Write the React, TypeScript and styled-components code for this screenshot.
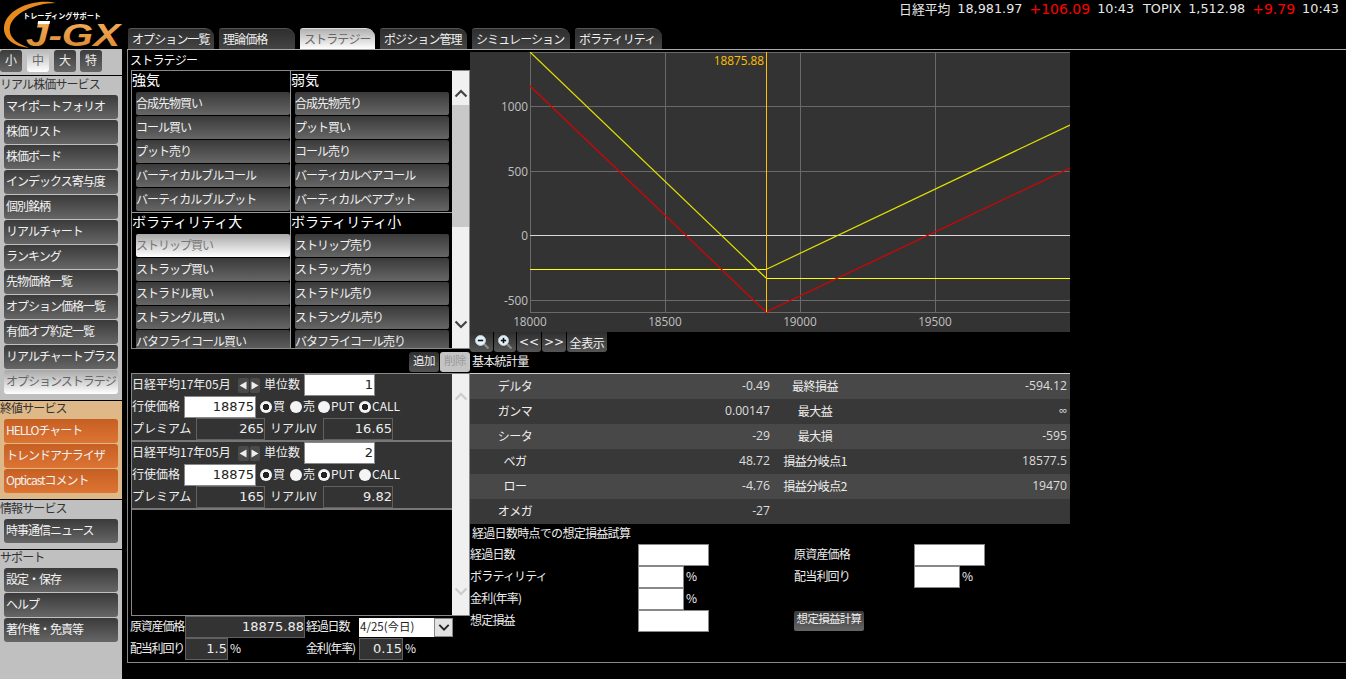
import React from "react";
import styled, { createGlobalStyle } from "styled-components";

const jpFont = `"Noto Sans CJK JP", "Noto Sans", sans-serif`;
const numFont = `"DejaVu Sans", sans-serif`;
const uiFont = `"Open Sans", sans-serif`;

const GlobalStyle = createGlobalStyle`
  html, body { margin: 0; padding: 0; background: #000; }
  body { font-family: ${jpFont}; color: #eee; }
  * { box-sizing: border-box; }
`;

const Page = styled.div`
  width: 1346px;
  height: 679px;
  display: flex;
  overflow: hidden;
  background: #000;
`;

const LeftRail = styled.div`
  width: 122px;
  flex: none;
  display: flex;
  flex-direction: column;
`;

const LogoBox = styled.div`
  height: 49px;
  flex: none;
`;

const LogoSvg = styled.svg`
  display: block;
  overflow: visible;
`;

const Sidebar = styled.div`
  flex: 1;
  background: #c0c0c0;
`;

const SizeRow = styled.div`
  height: 27px;
  display: flex;
  padding: 1px 0 0 0;
  border-bottom: 1px solid #000;
`;

const SizeButton = styled.div<{ $active?: boolean; $left: number }>`
  width: 22px;
  height: 22px;
  margin-left: ${(p) => p.$left}px;
  border-radius: 3px;
  font-size: 12px;
  line-height: 20px;
  text-align: center;
  color: ${(p) => (p.$active ? "#666" : "#eee")};
  background: ${(p) =>
    p.$active ? "linear-gradient(#b8b8b8, #fff)" : "linear-gradient(#3c3c3c, #666)"};
`;

const Section = styled.div<{ $tint?: boolean; $top?: number; $last?: boolean }>`
  padding: ${(p) => p.$top ?? 0}px 0 6px;
  background: ${(p) => (p.$tint ? "#deb887" : "transparent")};
  border-bottom: ${(p) => (p.$last ? "none" : "1px solid #000")};
`;

const SectionLabel = styled.div`
  height: 18px;
  font-size: 12px;
  line-height: 14px;
  letter-spacing: -0.9px;
  color: #333;
`;

const NavList = styled.div`
  display: flex;
  flex-direction: column;
  gap: 1px;
  padding-left: 4px;
`;

const NavButton = styled.div<{ $kind?: "dark" | "on" | "orange" }>`
  width: 114px;
  height: 24px;
  padding-left: 2px;
  border-radius: 3px;
  font-size: 12px;
  line-height: 22px;
  letter-spacing: -1px;
  white-space: nowrap;
  overflow: hidden;
  color: ${(p) => (p.$kind === "on" ? "#666" : "#f2f2f2")};
  background: ${(p) =>
    p.$kind === "on"
      ? "linear-gradient(#a8a8a8, #fff)"
      : p.$kind === "orange"
        ? "linear-gradient(#c65f22, #dc7434)"
        : "linear-gradient(#3a3a3a, #666)"};
`;

const RightPane = styled.div`
  flex: 1;
  padding-left: 5px;
  display: flex;
  flex-direction: column;
`;

const Header = styled.div`
  height: 50px;
  flex: none;
  display: flex;
  flex-direction: column;
  border-bottom: 1px solid #aaa;
`;

const Ticker = styled.div`
  height: 28px;
  flex: none;
  display: flex;
  justify-content: flex-end;
  gap: 9px;
  padding: 0 7px 0 0;
`;

const TickerGroup = styled.div`
  display: flex;
  gap: 7px;
  height: 17px;
  align-items: center;
`;

const TickerText = styled.span<{ $up?: boolean }>`
  font-family: ${(p) => (p.$up ? numFont : `"DejaVu Sans", ${jpFont}`)};
  font-size: ${(p) => (p.$up ? 14 : 12.8)}px;
  color: ${(p) => (p.$up ? "#f00" : "#e8e8e8")};
  white-space: nowrap;
`;

const Tabs = styled.div`
  display: flex;
  gap: 5px;
  padding-left: 1px;
  height: 21px;
`;

const Tab = styled.div<{ $w: number; $active?: boolean }>`
  width: ${(p) => p.$w}px;
  padding-left: 4px;
  border-radius: 3px 9px 0 0;
  border-top: 1px solid ${(p) => (p.$active ? "#ddd" : "#555")};
  font-size: 12px;
  line-height: 19px;
  letter-spacing: -0.9px;
  white-space: nowrap;
  overflow: hidden;
  color: ${(p) => (p.$active ? "#666" : "#f0f0f0")};
  background: ${(p) =>
    p.$active ? "linear-gradient(#b0b0b0, #fff)" : "linear-gradient(#2e2e2e, #444)"};
`;

const Main = styled.div`
  height: 613px;
  flex: none;
  display: flex;
  border-left: 1px solid #888;
  border-bottom: 1px solid #888;
`;

const LeftCol = styled.div`
  width: 342px;
  flex: none;
  display: flex;
  flex-direction: column;
`;

const RightCol = styled.div`
  width: 600px;
  flex: none;
  padding-top: 2px;
  display: flex;
  flex-direction: column;
`;

const PanelTitle = styled.div`
  height: 20px;
  padding-left: 2px;
  font-size: 12px;
  line-height: 19px;
  letter-spacing: -0.8px;
  color: #fff;
`;

const Panel = styled.div<{ $h: number }>`
  height: ${(p) => p.$h}px;
  margin-left: 3px;
  display: flex;
  border: 1px solid #888;
  flex: none;
`;

const StrategyGrid = styled.div`
  width: 320px;
  flex: none;
  display: flex;
  flex-direction: column;
  clip-path: inset(-6px 0 0 0);
`;

const StrategyRow = styled.div<{ $divider?: boolean }>`
  display: flex;
  flex: none;
  border-bottom: ${(p) => (p.$divider ? "1px solid #999" : "none")};
`;

const Group = styled.div<{ $divider?: boolean }>`
  width: ${(p) => (p.$divider ? 159 : 161)}px;
  padding-left: 4px;
  padding-right: ${(p) => (p.$divider ? 0 : 3)}px;
  border-right: ${(p) => (p.$divider ? "1px solid #999" : "none")};
`;

const GroupTitle = styled.div`
  height: 21px;
  margin-left: -4px;
  font-size: 14px;
  line-height: 17px;
  color: #fff;
  white-space: nowrap;
`;

const StrategyButton = styled.div<{ $on?: boolean }>`
  height: 23px;
  margin-bottom: 1px;
  border-radius: 2px;
  font-size: 12px;
  line-height: 22px;
  letter-spacing: -1px;
  white-space: nowrap;
  color: ${(p) => (p.$on ? "#777" : "#f0f0f0")};
  background: ${(p) =>
    p.$on ? "linear-gradient(#a8a8a8, #fff)" : "linear-gradient(#3a3a3a, #666)"};
`;

const Scrollbar = styled.div`
  width: 17px;
  flex: none;
  display: flex;
  flex-direction: column;
  background: #f0f0f0;
`;

const ScrollArrow = styled.div<{ $bottom?: boolean }>`
  height: 34px;
  flex: none;
  display: flex;
  justify-content: center;
  align-items: ${(p) => (p.$bottom ? "flex-start" : "flex-end")};
  padding: ${(p) => (p.$bottom ? "6px 0 0" : "0 0 7px")};
  margin-top: ${(p) => (p.$bottom ? "auto" : "0")};
`;

const ScrollThumb = styled.div<{ $h: number }>`
  height: ${(p) => p.$h}px;
  background: #c8c8c8;
  flex: none;
`;

const ActionRow = styled.div`
  height: 24px;
  flex: none;
  padding-top: 3px;
  display: flex;
  justify-content: flex-end;
  gap: 1px;
`;

const ActionButton = styled.div<{ $off?: boolean }>`
  width: 30px;
  height: 20px;
  border-radius: 3px;
  font-size: 11.5px;
  line-height: 17px;
  text-align: center;
  letter-spacing: -0.5px;
  color: ${(p) => (p.$off ? "#999" : "#eee")};
  background: ${(p) => (p.$off ? "#c4c4c4" : "linear-gradient(#2e2e2e, #555)")};
`;

const LegList = styled.div`
  width: 320px;
  flex: none;
`;

const Leg = styled.div`
  height: 68px;
  background: #333;
  border-bottom: 2px solid #777;
`;

const LegRow = styled.div`
  height: 22px;
  display: flex;
  align-items: center;
`;

const FieldLabel = styled.div<{ $w: number; $pad?: number; $tight?: boolean }>`
  width: ${(p) => p.$w}px;
  height: 22px;
  flex: none;
  padding-left: ${(p) => p.$pad ?? 0}px;
  font-size: 12px;
  line-height: 19px;
  letter-spacing: ${(p) => (p.$tight ? "-1.2px" : "0")};
  white-space: nowrap;
  color: #f0f0f0;
`;

const WhiteBox = styled.div<{ $w: number }>`
  width: ${(p) => p.$w}px;
  height: 22px;
  flex: none;
  padding-right: 1px;
  background: #fff;
  border: 1px solid #888;
  font-family: ${numFont};
  font-size: 13px;
  line-height: 20px;
  text-align: right;
  color: #222;
`;

const DarkBox = styled.div<{ $w: number }>`
  width: ${(p) => p.$w}px;
  height: 22px;
  flex: none;
  background: #333;
  border: 1px solid #606060;
  font-family: ${numFont};
  font-size: 13px;
  line-height: 20px;
  text-align: right;
  color: #eee;
`;

const Spinner = styled.div`
  width: 22px;
  height: 15px;
  flex: none;
  display: flex;
  gap: 1px;
`;

const SpinButton = styled.div`
  flex: 1;
  display: flex;
  align-items: center;
  justify-content: center;
  background: #4a4a4a;
  border-radius: 2px;
`;

const RadioGroup = styled.div`
  display: flex;
  margin-left: 4px;
`;

const RadioItem = styled.div<{ $w: number }>`
  width: ${(p) => p.$w}px;
  flex: none;
  display: flex;
  align-items: center;
  gap: 1px;
`;

const RadioText = styled.span`
  font-size: 12px;
  line-height: 16px;
  margin-top: -3px;
  color: #f0f0f0;
`;

const RadioDot = styled.span<{ $on?: boolean }>`
  width: 12px;
  height: 12px;
  flex: none;
  border-radius: 50%;
  background: ${(p) =>
    p.$on ? "radial-gradient(circle, #222 0 3px, #f4f4f4 3.5px)" : "#f4f4f4"};
`;

const BottomRow = styled.div`
  height: 22px;
  flex: none;
  display: flex;
  align-items: center;
  padding-left: 2px;
`;

const Percent = styled.div<{ $w?: number }>`
  width: ${(p) => (p.$w ? `${p.$w}px` : "auto")};
  flex: none;
  padding-left: 2px;
  font-size: 12px;
  line-height: 18px;
  margin-top: -2px;
  color: #eee;
`;

const SelectBox = styled.div`
  width: 94px;
  height: 19px;
  flex: none;
  display: flex;
  background: #fff;
  font-size: 11.5px;
  line-height: 17px;
  color: #222;
  padding-left: 1px;
`;

const SelectValue = styled.div`
  flex: 1;
  white-space: nowrap;
`;

const SelectArrow = styled.div`
  width: 19px;
  flex: none;
  display: flex;
  align-items: center;
  justify-content: center;
  background: #e2e2e2;
  border: 1px solid #888;
`;

const ChartBox = styled.div`
  height: 280px;
  flex: none;
  background: #333;
`;

const ChartSvg = styled.svg`
  display: block;
  font-family: ${uiFont};
  font-size: 11.8px;
`;

const Toolbar = styled.div`
  height: 20px;
  flex: none;
  display: flex;
  gap: 1px;
`;

const ToolButton = styled.div<{ $w: number; $arrows?: boolean }>`
  width: ${(p) => p.$w}px;
  display: flex;
  align-items: center;
  justify-content: center;
  border-radius: 0 0 3px 3px;
  font-family: ${(p) => (p.$arrows ? numFont : jpFont)};
  font-size: 12px;
  line-height: 17px;
  letter-spacing: ${(p) => (p.$arrows ? "0" : "-0.4px")};
  color: #eee;
  background: linear-gradient(#2e2e2e, #555);
`;

const SubTitle = styled.div<{ $h: number }>`
  height: ${(p) => p.$h}px;
  flex: none;
  padding-left: 2px;
  font-size: 12px;
  line-height: ${(p) => p.$h - 3}px;
  letter-spacing: -0.7px;
  color: #eee;
`;

const StatsTable = styled.div`
  flex: none;
  border-top: 1px solid #ccc;
`;

const StatsRow = styled.div<{ $odd: boolean }>`
  height: 25px;
  display: grid;
  grid-template-columns: 90px 210px 90px 207px;
  align-items: center;
  background: ${(p) => (p.$odd ? "#484848" : "#383838")};
`;

const StatsLabel = styled.div`
  font-size: 12px;
  line-height: 17px;
  margin-top: -3px;
  letter-spacing: -0.5px;
  text-align: center;
  white-space: nowrap;
  color: #eee;
`;

const StatsValue = styled.div`
  font-family: ${uiFont};
  font-size: 12.2px;
  line-height: 15px;
  margin-top: -2px;
  text-align: right;
  color: #ddd;
`;

const SimGrid = styled.div`
  display: grid;
  grid-template-columns: 168px 156px 120px 1fr;
  grid-auto-rows: 22px;
  align-items: center;
`;

const SimLabel = styled.div`
  font-size: 12px;
  line-height: 16px;
  margin-top: -3px;
  letter-spacing: -0.8px;
  color: #eee;
  white-space: nowrap;
`;

const SimCell = styled.div`
  display: flex;
  align-items: center;
`;

const SimInput = styled.div<{ $w: number }>`
  width: ${(p) => p.$w}px;
  height: 22px;
  flex: none;
  background: #fff;
  border: 1px solid #888;
`;

const CalcButton = styled.div`
  width: 70px;
  height: 20px;
  border-radius: 2px;
  font-size: 11.5px;
  line-height: 15px;
  letter-spacing: -0.7px;
  text-align: center;
  color: #eee;
  background: linear-gradient(#3a3a3a, #666);
`;

const Logo = () => (
  <LogoSvg width="122" height="49" viewBox="0 0 122 49">
    <defs>
      <linearGradient id="gx" x1="0" y1="0" x2="0" y2="1">
        <stop offset="0" stopColor="#f4b060" />
        <stop offset="1" stopColor="#d8862c" />
      </linearGradient>
    </defs>
    <path
      d="M56 3 C36 -2 6 8 4 27 C3 38 14 47 29 47.5 C17 44 8 37 10 27 C12 14 34 3 56 3 Z"
      fill="#e88a1c"
    />
    <text x="23" y="19" fontFamily={jpFont} fontSize="7.5" fontWeight="700" fill="#fff" textLength="78" lengthAdjust="spacingAndGlyphs">
      トレーディングサポート
    </text>
    <text x="26" y="46" fontFamily={`"Liberation Sans", sans-serif`} fontSize="31" fontWeight="700" fontStyle="italic" fill="url(#gx)" textLength="94" lengthAdjust="spacingAndGlyphs">
      J-GX
    </text>
    <rect x="38" y="21" width="12" height="3" fill="#fff" transform="skewX(-8) translate(3 0)" />
  </LogoSvg>
);

const Chevron = ({ up, color, w = 14 }: { up?: boolean; color: string; w?: number }) => (
  <svg width={w} height="9" viewBox="0 0 14 9">
    <path d={up ? "M1.5 7.5 L7 2 L12.5 7.5" : "M1.5 1.5 L7 7 L12.5 1.5"} fill="none" stroke={color} strokeWidth="2.2" />
  </svg>
);

const Magnifier = ({ plus }: { plus?: boolean }) => (
  <svg width="16" height="16" viewBox="0 0 16 16">
    <path d="M9 9 L14.5 14.5" stroke="#888" strokeWidth="2.4" />
    <circle cx="6.5" cy="6.5" r="5" fill="#e4f4fa" stroke="#b8c8d0" />
    <path d="M3.8 6.5 H9.2" stroke="#111" strokeWidth="1.6" />
    {plus && <path d="M6.5 3.8 V9.2" stroke="#111" strokeWidth="1.6" />}
  </svg>
);

const Triangle = ({ right }: { right?: boolean }) => (
  <svg width="8" height="9" viewBox="0 0 8 9">
    <path d={right ? "M0.5 0.5 L7.5 4.5 L0.5 8.5 Z" : "M7.5 0.5 L0.5 4.5 L7.5 8.5 Z"} fill="#eee" />
  </svg>
);

const xTicks = [
  { x: 60, t: "18000" },
  { x: 195, t: "18500" },
  { x: 330, t: "19000" },
  { x: 465, t: "19500" },
];
const yTicks = [
  { y: 54, t: "1000" },
  { y: 119, t: "500" },
  { y: 183, t: "0" },
  { y: 248, t: "-500" },
];

const PayoffChart = () => (
  <ChartSvg width="600" height="280" viewBox="0 0 600 280">
    <line x1="60" y1="0.5" x2="600" y2="0.5" stroke="#6a6a6a" />
    <line x1="60" y1="260.5" x2="600" y2="260.5" stroke="#6a6a6a" />
    {xTicks.map((k) => (
      <g key={k.t}>
        <line x1={k.x + 0.5} y1="0" x2={k.x + 0.5} y2="260" stroke="#6a6a6a" />
        <text x={k.x} y="274" textAnchor="middle" fill="#c0c0c0">
          {k.t}
        </text>
      </g>
    ))}
    {yTicks.map((k) => (
      <g key={k.t}>
        <line x1="60" y1={k.y + 0.5} x2="600" y2={k.y + 0.5} stroke={k.t === "0" ? "#d8d8d8" : "#6a6a6a"} />
        <text x="58" y={k.y + 5} textAnchor="end" fill="#c0c0c0">
          {k.t}
        </text>
      </g>
    ))}
    <line x1="60" y1="217.5" x2="296" y2="217.5" stroke="#ffff00" />
    <line x1="296" y1="226.5" x2="600" y2="226.5" stroke="#ffff00" />
    <polyline points="60,0 296,226" fill="none" stroke="#e0e000" strokeWidth="1.2" />
    <polyline points="296,217.5 600,73" fill="none" stroke="#e0e000" strokeWidth="1.2" />
    <polyline points="60,34 296,260 600,116" fill="none" stroke="#dc0000" strokeWidth="1.2" />
    <line x1="296.5" y1="0" x2="296.5" y2="260" stroke="#ffc000" />
    <text x="294" y="13" textAnchor="end" fill="#ffc000">
      18875.88
    </text>
  </ChartSvg>
);

const realtimeItems = [
  "マイポートフォリオ",
  "株価リスト",
  "株価ボード",
  "インデックス寄与度",
  "個別銘柄",
  "リアルチャート",
  "ランキング",
  "先物価格一覧",
  "オプション価格一覧",
  "有価オプ約定一覧",
  "リアルチャートプラス",
];

const tabs = [
  { t: "オプション一覧", w: 86 },
  { t: "理論価格", w: 76 },
  { t: "ストラテジー", w: 75, active: true },
  { t: "ポジション管理", w: 87 },
  { t: "シミュレーション", w: 98 },
  { t: "ボラティリティ", w: 87 },
];

const bull = ["合成先物買い", "コール買い", "プット売り", "バーティカルブルコール", "バーティカルブルプット"];
const bear = ["合成先物売り", "プット買い", "コール売り", "バーティカルベアコール", "バーティカルベアプット"];
const volUp = ["ストリップ買い", "ストラップ買い", "ストラドル買い", "ストラングル買い", "バタフライコール買い"];
const volDown = ["ストリップ売り", "ストラップ売り", "ストラドル売り", "ストラングル売り", "バタフライコール売り"];

const stats = [
  ["デルタ", "-0.49", "最終損益", "-594.12"],
  ["ガンマ", "0.00147", "最大益", "∞"],
  ["シータ", "-29", "最大損", "-595"],
  ["ベガ", "48.72", "損益分岐点1", "18577.5"],
  ["ロー", "-4.76", "損益分岐点2", "19470"],
  ["オメガ", "-27", "", ""],
];

const legs = [
  { unit: "1", call: true, premium: "265", iv: "16.65" },
  { unit: "2", call: false, premium: "165", iv: "9.82" },
];

const App = () => (
  <Page>
    <GlobalStyle />
    <LeftRail>
      <LogoBox>
        <Logo />
      </LogoBox>
      <Sidebar>
        <SizeRow>
          <SizeButton $left={0}>小</SizeButton>
          <SizeButton $left={5} $active>
            中
          </SizeButton>
          <SizeButton $left={5}>大</SizeButton>
          <SizeButton $left={4}>特</SizeButton>
        </SizeRow>
        <Section $top={1}>
          <SectionLabel>リアル株価サービス</SectionLabel>
          <NavList>
            {realtimeItems.map((t) => (
              <NavButton key={t}>{t}</NavButton>
            ))}
            <NavButton $kind="on">オプションストラテジ</NavButton>
          </NavList>
        </Section>
        <Section $tint>
          <SectionLabel>終値サービス</SectionLabel>
          <NavList>
            <NavButton $kind="orange">HELLOチャート</NavButton>
            <NavButton $kind="orange">トレンドアナライザ</NavButton>
            <NavButton $kind="orange">Opticastコメント</NavButton>
          </NavList>
        </Section>
        <Section $top={1}>
          <SectionLabel>情報サービス</SectionLabel>
          <NavList>
            <NavButton>時事通信ニュース</NavButton>
          </NavList>
        </Section>
        <Section $last>
          <SectionLabel>サポート</SectionLabel>
          <NavList>
            <NavButton>設定・保存</NavButton>
            <NavButton>ヘルプ</NavButton>
            <NavButton>著作権・免責等</NavButton>
          </NavList>
        </Section>
      </Sidebar>
    </LeftRail>

    <RightPane>
      <Header>
        <Ticker>
          <TickerGroup>
            <TickerText>日経平均</TickerText>
            <TickerText>18,981.97</TickerText>
            <TickerText $up>+106.09</TickerText>
            <TickerText>10:43</TickerText>
          </TickerGroup>
          <TickerGroup>
            <TickerText>TOPIX</TickerText>
            <TickerText>1,512.98</TickerText>
            <TickerText $up>+9.79</TickerText>
            <TickerText>10:43</TickerText>
          </TickerGroup>
        </Ticker>
        <Tabs>
          {tabs.map((t) => (
            <Tab key={t.t} $w={t.w} $active={t.active}>
              {t.t}
            </Tab>
          ))}
        </Tabs>
      </Header>

      <Main>
        <LeftCol>
          <PanelTitle>ストラテジー</PanelTitle>
          <Panel $h={279}>
            <StrategyGrid>
              <StrategyRow $divider>
                <Group $divider>
                  <GroupTitle>強気</GroupTitle>
                  {bull.map((t) => (
                    <StrategyButton key={t}>{t}</StrategyButton>
                  ))}
                </Group>
                <Group>
                  <GroupTitle>弱気</GroupTitle>
                  {bear.map((t) => (
                    <StrategyButton key={t}>{t}</StrategyButton>
                  ))}
                </Group>
              </StrategyRow>
              <StrategyRow>
                <Group $divider>
                  <GroupTitle>ボラティリティ大</GroupTitle>
                  {volUp.map((t, i) => (
                    <StrategyButton key={t} $on={i === 0}>
                      {t}
                    </StrategyButton>
                  ))}
                </Group>
                <Group>
                  <GroupTitle>ボラティリティ小</GroupTitle>
                  {volDown.map((t) => (
                    <StrategyButton key={t}>{t}</StrategyButton>
                  ))}
                </Group>
              </StrategyRow>
            </StrategyGrid>
            <Scrollbar>
              <ScrollArrow>
                <Chevron up color="#444" />
              </ScrollArrow>
              <ScrollThumb $h={122} />
              <ScrollArrow $bottom>
                <Chevron color="#444" />
              </ScrollArrow>
            </Scrollbar>
          </Panel>

          <ActionRow>
            <ActionButton>追加</ActionButton>
            <ActionButton $off>削除</ActionButton>
          </ActionRow>

          <Panel $h={243}>
            <LegList>
              {legs.map((leg) => (
                <Leg key={leg.unit}>
                  <LegRow>
                    <FieldLabel $w={106}>日経平均17年05月</FieldLabel>
                    <Spinner>
                      <SpinButton>
                        <Triangle />
                      </SpinButton>
                      <SpinButton>
                        <Triangle right />
                      </SpinButton>
                    </Spinner>
                    <FieldLabel $w={44} $pad={4}>
                      単位数
                    </FieldLabel>
                    <WhiteBox $w={71}>{leg.unit}</WhiteBox>
                  </LegRow>
                  <LegRow>
                    <FieldLabel $w={52}>行使価格</FieldLabel>
                    <WhiteBox $w={72}>18875</WhiteBox>
                    <RadioGroup>
                      <RadioItem $w={30}>
                        <RadioDot $on />
                        <RadioText>買</RadioText>
                      </RadioItem>
                      <RadioItem $w={28}>
                        <RadioDot />
                        <RadioText>売</RadioText>
                      </RadioItem>
                      <RadioItem $w={41}>
                        <RadioDot $on={!leg.call} />
                        <RadioText>PUT</RadioText>
                      </RadioItem>
                      <RadioItem $w={44}>
                        <RadioDot $on={leg.call} />
                        <RadioText>CALL</RadioText>
                      </RadioItem>
                    </RadioGroup>
                  </LegRow>
                  <LegRow>
                    <FieldLabel $w={64}>プレミアム</FieldLabel>
                    <DarkBox $w={69}>{leg.premium}</DarkBox>
                    <FieldLabel $w={58} $pad={5}>
                      リアルIV
                    </FieldLabel>
                    <DarkBox $w={70}>{leg.iv}</DarkBox>
                  </LegRow>
                </Leg>
              ))}
            </LegList>
            <Scrollbar>
              <ScrollArrow>
                <Chevron up color="#ccc" />
              </ScrollArrow>
              <ScrollArrow $bottom>
                <Chevron color="#ccc" />
              </ScrollArrow>
            </Scrollbar>
          </Panel>

          <BottomRow>
            <FieldLabel $w={55} $tight>
              原資産価格
            </FieldLabel>
            <DarkBox $w={120}>18875.88</DarkBox>
            <FieldLabel $w={54} $pad={1} $tight>
              経過日数
            </FieldLabel>
            <SelectBox>
              <SelectValue>4/25(今日)</SelectValue>
              <SelectArrow>
                <Chevron color="#222" w={12} />
              </SelectArrow>
            </SelectBox>
          </BottomRow>
          <BottomRow>
            <FieldLabel $w={55} $tight>
              配当利回り
            </FieldLabel>
            <DarkBox $w={43}>1.5</DarkBox>
            <Percent $w={78}>%</Percent>
            <FieldLabel $w={53} $tight>
              金利(年率)
            </FieldLabel>
            <DarkBox $w={44}>0.15</DarkBox>
            <Percent>%</Percent>
          </BottomRow>
        </LeftCol>

        <RightCol>
          <ChartBox>
            <PayoffChart />
          </ChartBox>
          <Toolbar>
            <ToolButton $w={23}>
              <Magnifier />
            </ToolButton>
            <ToolButton $w={22}>
              <Magnifier plus />
            </ToolButton>
            <ToolButton $w={24} $arrows>
              &lt;&lt;
            </ToolButton>
            <ToolButton $w={24} $arrows>
              &gt;&gt;
            </ToolButton>
            <ToolButton $w={40}>全表示</ToolButton>
          </Toolbar>
          <SubTitle $h={21}>基本統計量</SubTitle>
          <StatsTable>
            {stats.map((r, i) => (
              <StatsRow key={r[0]} $odd={i % 2 === 0}>
                <StatsLabel>{r[0]}</StatsLabel>
                <StatsValue>{r[1]}</StatsValue>
                <StatsLabel>{r[2]}</StatsLabel>
                <StatsValue>{r[3]}</StatsValue>
              </StatsRow>
            ))}
          </StatsTable>
          <SubTitle $h={20}>経過日数時点での想定損益試算</SubTitle>
          <SimGrid>
            <SimLabel>経過日数</SimLabel>
            <SimCell>
              <SimInput $w={71} />
            </SimCell>
            <SimLabel>原資産価格</SimLabel>
            <SimCell>
              <SimInput $w={71} />
            </SimCell>

            <SimLabel>ボラティリティ</SimLabel>
            <SimCell>
              <SimInput $w={46} />
              <Percent>%</Percent>
            </SimCell>
            <SimLabel>配当利回り</SimLabel>
            <SimCell>
              <SimInput $w={46} />
              <Percent>%</Percent>
            </SimCell>

            <SimLabel>金利(年率)</SimLabel>
            <SimCell>
              <SimInput $w={46} />
              <Percent>%</Percent>
            </SimCell>
            <span />
            <span />

            <SimLabel>想定損益</SimLabel>
            <SimCell>
              <SimInput $w={71} />
            </SimCell>
            <SimCell>
              <CalcButton>想定損益計算</CalcButton>
            </SimCell>
            <span />
          </SimGrid>
        </RightCol>
      </Main>
    </RightPane>
  </Page>
);

export default App;
